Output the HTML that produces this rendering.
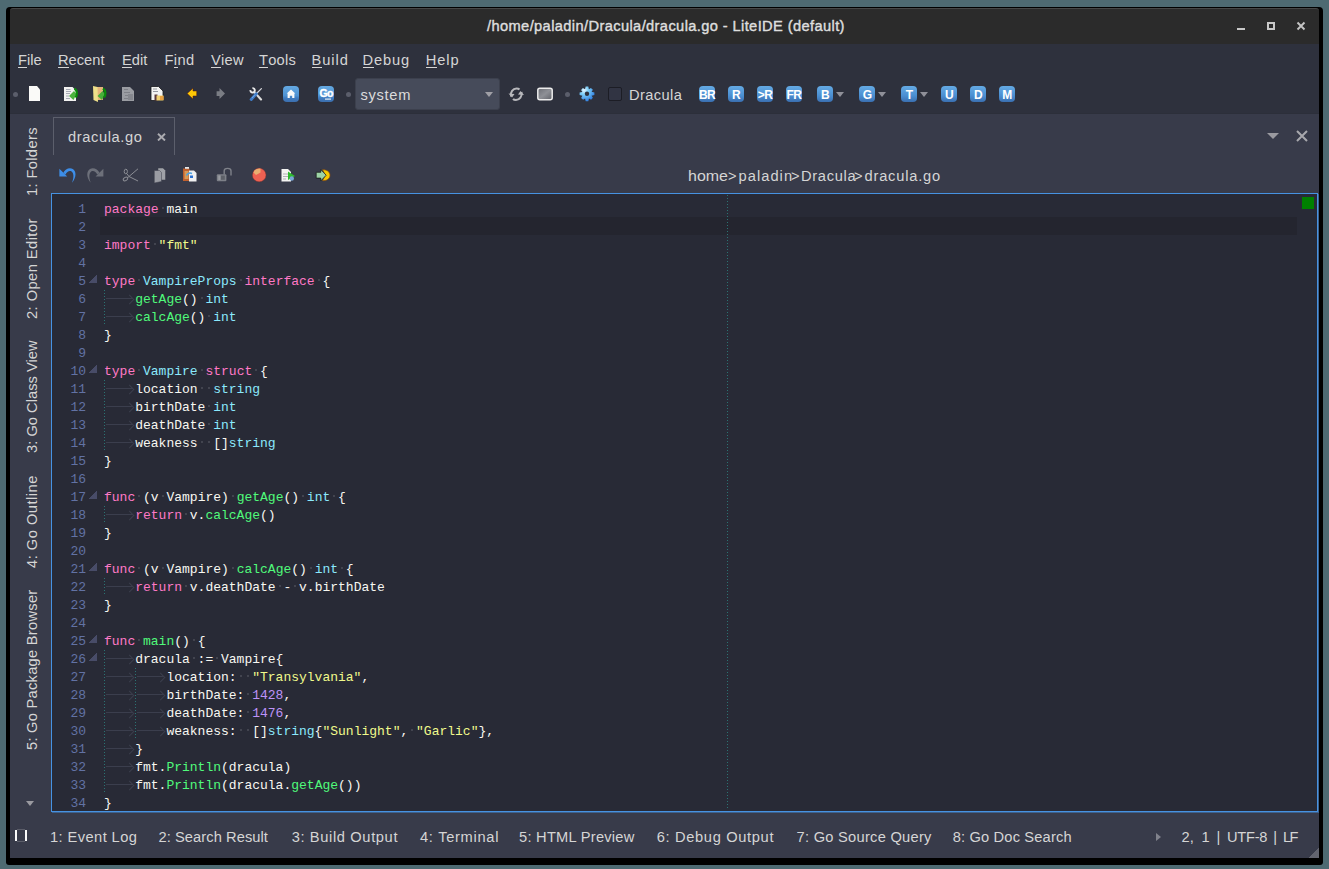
<!DOCTYPE html>
<html><head><meta charset="utf-8">
<style>
*{margin:0;padding:0;box-sizing:border-box}
html,body{width:1329px;height:869px;overflow:hidden;background:#4e6a72;font-family:"Liberation Sans",sans-serif}
.a{position:absolute}
#win{position:absolute;left:6px;top:7px;width:1317px;height:858px;background:#000;border-radius:4px 4px 3px 3px}
#title{position:absolute;left:10px;top:8px;width:1309px;height:36px;background:#2b2b2b;border-top:1px solid #474747;border-radius:3px 3px 0 0}
#title .t{position:absolute;left:477px;top:9px;font-size:14.67px;font-weight:400;color:#dedede;white-space:pre;letter-spacing:0.38px;-webkit-text-stroke:0.4px #dedede}
#top{position:absolute;left:10px;top:44px;width:1309px;height:70px;background:#2e313d;border-bottom:1px solid #2c2f3a}
#main{position:absolute;left:10px;top:114px;width:1309px;height:744px;background:#383b4a}
.menu{position:absolute;top:52px;font-size:14.67px;color:#d5d5d5;white-space:pre}
.menu u{text-decoration:none;position:relative}
.menu u:after{content:"";position:absolute;left:0;right:0;bottom:0px;height:1px;background:#d5d5d5}
.hdot{position:absolute;width:5px;height:5px;border-radius:50%;background:#5b5e6b}
.bi{position:absolute;top:86px;width:16px;height:16px;border-radius:4px;background:linear-gradient(#64aae4,#4b8fd2 60%,#3a6fb0);color:#fff;font-weight:700;font-size:12px;line-height:19px;text-align:center;letter-spacing:-0.6px}
.darr{position:absolute;top:92px;width:0;height:0;border-left:4px solid transparent;border-right:4px solid transparent;border-top:5px solid #8f9099}
#combo{position:absolute;left:355px;top:78px;width:145px;height:32px;background:#464b5a;border:1px solid #3c404d;border-radius:3px}
#combo .t{position:absolute;left:4.5px;top:8px;letter-spacing:0.7px;font-size:14.67px;color:#dcdcdc}
#combo .ar{position:absolute;left:129px;top:13px;border-left:4px solid transparent;border-right:4px solid transparent;border-top:5px solid #a0a0a6}
#chk{position:absolute;left:608px;top:87px;width:14px;height:14px;border:1px solid #1c1d25;border-radius:2px;background:#313443}
.bc{top:168px;color:#b4b4b4;transform-origin:0 0}
.txt{position:absolute;font-size:14.67px;color:#d5d5d5;white-space:pre}
#tab{position:absolute;left:53px;top:117px;width:122px;height:38px;border:1px solid #5c5f6c;border-bottom:none}
#editor{position:absolute;left:51px;top:193px;width:1267px;height:619px;border:1px solid #4692e2;box-shadow:1px 1px 0 rgba(70,146,226,0.45);background:#282a36;overflow:hidden}
#edwrap{position:absolute;left:0;top:0;width:1329px;height:869px;clip-path:inset(194px 10px 57px 52px)}
.curl{position:absolute;left:100px;top:217px;width:1197px;height:18px;background:#24252f}
.ruler{position:absolute;left:727px;top:195px;width:1px;height:613px;background:repeating-linear-gradient(#2b7373 0 1px,transparent 1px 3px)}
.guide{position:absolute;width:1px;background:repeating-linear-gradient(#2b7373 0 1px,transparent 1px 3px)}
.ln{position:absolute;left:0;height:18px;width:1300px;font-family:"Liberation Mono",monospace;font-size:13px;line-height:18px;white-space:pre}
.ln .no{position:absolute;left:0;width:86px;text-align:right;color:#6272a4}
.ln .cd{position:absolute;left:104px;top:0}
.ln b{font-weight:400}
.k{color:#ff79c6}.t{color:#8be9fd}.f{color:#50fa7b}.s{color:#f1fa8c}.n{color:#bd93f9}.d{color:#f8f8f2}
.sp{display:inline-block;width:7.8px;height:18px;vertical-align:top;position:relative}
.sp:after{content:"";position:absolute;left:3px;top:6px;width:2px;height:2px;background:#42444f}
.tb{display:inline-block;width:31.2px;height:18px;vertical-align:top;position:relative}
.tb:before{content:"";position:absolute;left:2px;top:7px;width:26.5px;height:1px;background:#3b3e4d}
.tb:after{content:"";position:absolute;left:21.8px;top:4.5px;width:6px;height:6px;border-right:1px solid #3b3e4d;border-top:1px solid #3b3e4d;transform:rotate(45deg);transform-origin:center}
.fold{position:absolute;left:89px;width:8px;height:8px;background:linear-gradient(to bottom right,transparent 50%,#484c68 50%)}
.vt{position:absolute;left:23.5px;font-size:14.67px;color:#d5d5d5;white-space:pre;transform-origin:0 0;transform:rotate(-90deg)}
.st{color:#e6e6e6}
.bt{position:absolute;top:829px;font-size:14.67px;color:#d5d5d5;white-space:pre}
</style></head><body>
<div id="win"></div>
<div id="title"><span class="t">/home/paladin/Dracula/dracula.go - LiteIDE (default)</span>
</div>
<!-- window controls -->
<div class="a" style="left:1237px;top:28px;width:8px;height:2px;background:#c8c8c8"></div>
<div class="a" style="left:1267px;top:22px;width:8px;height:8px;border:2px solid #c8c8c8"></div>
<svg class="a" style="left:1296px;top:21px" width="10" height="10" viewBox="0 0 10 10"><path d="M1.5 1.5L8.5 8.5M8.5 1.5L1.5 8.5" stroke="#c4c4c4" stroke-width="1.9"/></svg>

<div id="top"></div>
<div id="main"></div>

<!-- menu -->
<span class="menu" style="left:18px"><u>F</u>ile</span>
<span class="menu" style="left:58px"><u>R</u>ecent</span>
<span class="menu" style="left:122px"><u>E</u>dit</span>
<span class="menu" style="left:164.5px;letter-spacing:0.4px">F<u>i</u>nd</span>
<span class="menu" style="left:211px;letter-spacing:0.25px"><u>V</u>iew</span>
<span class="menu" style="left:259px;letter-spacing:0.25px"><u>T</u>ools</span>
<span class="menu" style="left:311.5px;letter-spacing:0.95px"><u>B</u>uild</span>
<span class="menu" style="left:362.5px;letter-spacing:0.85px"><u>D</u>ebug</span>
<span class="menu" style="left:425.8px;letter-spacing:0.9px"><u>H</u>elp</span>

<!-- toolbar -->
<div class="hdot" style="left:13px;top:92px"></div>
<div class="hdot" style="left:346px;top:92px"></div>
<div class="hdot" style="left:565px;top:92px"></div>


<svg class="a" style="left:0;top:0" width="620" height="200" viewBox="0 0 620 200">
<defs>
<linearGradient id="bl" x1="0" y1="0" x2="0" y2="1"><stop offset="0" stop-color="#64a9e2"/><stop offset="0.6" stop-color="#4f93d4"/><stop offset="0.75" stop-color="#3f7bc0"/><stop offset="1" stop-color="#3c6fae"/></linearGradient>
<linearGradient id="scr" x1="0" y1="0" x2="1" y2="1"><stop offset="0" stop-color="#6b6d74"/><stop offset="0.5" stop-color="#8e9096"/><stop offset="1" stop-color="#5f6168"/></linearGradient>
<radialGradient id="gear" cx="0.3" cy="0.25" r="0.8"><stop offset="0" stop-color="#e8f6ff"/><stop offset="0.35" stop-color="#7fd0f8"/><stop offset="1" stop-color="#2f7de0"/></radialGradient>
</defs>
<!-- new file -->
<path d="M29 86H37L40 89.5V101H29Z" fill="#fafaf8"/>
<!-- open file -->
<path d="M64 87H72.5L76 90.5V101H64Z" fill="#f2f2f0"/>
<path d="M66 89.5h4.5M66 91.5h5M66 93.5h4M66 96h3M66 98.5h4" stroke="#9ea3ad" stroke-width="0.9"/>
<path d="M69 96L74 91L76.5 94L73.5 100Z" fill="#4cb33e"/>
<path d="M74.5 88.5C77.5 90.5 77.5 95 75.5 97.5" stroke="#0a8a0a" stroke-width="2.2" fill="none"/>
<!-- open folder -->
<path d="M97 87H103V100H97Z" fill="#e5b57a"/>
<path d="M93 86L97.5 87L98 102L93.5 100Z" fill="#efe08a"/>
<path d="M97.5 96L102.5 91L105 94L102 100Z" fill="#48b03a"/>
<path d="M103 88.5C106 90.5 106 95 104 97.5" stroke="#0a8a0a" stroke-width="2.2" fill="none"/>
<!-- gray doc -->
<path d="M122 87H130L134 91V101H122Z" fill="#9a9ca2"/>
<path d="M124 89.5h4M124 92.5h6M125 95.5h3M124 98.5h4" stroke="#7e8087" stroke-width="1"/>
<path d="M128 94h5v6h-5z" fill="#85878e"/>
<!-- save all doc -->
<path d="M151 86.5H158.5L163 91V100.5H151Z" fill="#f3f3f1" stroke="#15161c" stroke-width="0.8"/>
<path d="M153 89h4M153 91.5h5" stroke="#8a8e96" stroke-width="0.9"/>
<path d="M154.5 94.5h3v6h-3z" fill="#5a3a3a"/>
<path d="M156.5 95.5h7v5h-7z" fill="#f0d070"/>
<path d="M160 96h3.5v4h-3.5z" fill="#e8a040"/>
<!-- yellow back arrow -->
<path d="M187.2 93.5L193 88.2V91H196.7V96H193V99Z" fill="#ffc806" stroke="#5a1a10" stroke-width="0.5"/>
<!-- gray forward arrow -->
<path d="M225 93.5L219.5 88V91.2H216.6V96H219.5V99Z" fill="#7a7d84"/>
<!-- tools -->
<path d="M254.6 92.4L261 99.4" stroke="#dcdcdc" stroke-width="2.2" stroke-linecap="round"/>
<path d="M252.41 88.11A2.2 2.2 0 1 1 250.41 90.11" stroke="#ececec" stroke-width="1.9" fill="none"/>
<path d="M261.4 88.6L256.5 93.5" stroke="#d4d4d8" stroke-width="1.3" stroke-linecap="round"/>
<path d="M256.3 93.8L251.2 99.4" stroke="#3f7cc8" stroke-width="3" stroke-linecap="round"/>
<path d="M255.2 94.6L252 98" stroke="#7fb0e8" stroke-width="0.8"/>
<!-- home -->
<rect x="283" y="86" width="16" height="16" rx="4" fill="url(#bl)"/>
<path d="M291 89.5L295.3 93.6H294.4V98H292.2V95.8H289.8V98H287.6V93.6H286.7Z" fill="#fafafa"/>
<!-- go -->
<rect x="318" y="86" width="16" height="16" rx="4" fill="url(#bl)"/>
<text x="319.4" y="97.4" font-family="Liberation Sans" font-weight="700" font-size="10.5" fill="#fff" stroke="#fff" stroke-width="0.35" letter-spacing="-0.5">Go</text>
<rect x="325" y="98.5" width="6" height="1.2" fill="#e0eaf4"/>
<!-- refresh -->
<path d="M511 96.5C510 92 513 88.5 516.5 88.5C518 88.5 519 89 519.5 89.5" stroke="#b8b8bc" stroke-width="2" fill="none"/>
<path d="M508.5 93.5L512 97.5L514.5 94Z" fill="#b8b8bc"/>
<path d="M521.5 92C522.5 96.5 519.5 100 516 100C514.5 100 513.5 99.5 513 99" stroke="#b8b8bc" stroke-width="2" fill="none"/>
<path d="M524 95L520.5 91L518 94.5Z" fill="#b8b8bc"/>
<!-- screen -->
<rect x="537.8" y="88.2" width="14.4" height="11.6" rx="2" fill="url(#scr)" stroke="#ececec" stroke-width="1.5"/>
<!-- gear -->
<g transform="translate(587 93.8)">
<path d="M-1.3 -7.4L1.3 -7.4L1.9 -4.6L3.9 -5.9L5.9 -4.1L4.6 -2L7.4 -1.3L7.4 1.3L4.6 1.9L5.9 3.9L4.1 5.9L2 4.6L1.3 7.4L-1.3 7.4L-1.9 4.6L-3.9 5.9L-5.9 4.1L-4.6 2L-7.4 1.3L-7.4 -1.3L-4.6 -1.9L-5.9 -3.9L-4.1 -5.9L-2 -4.6Z" fill="url(#gear)"/>
<circle r="2.2" fill="#2e313d"/>
</g>
</svg>

<div id="combo"><span class="t">system</span><span class="ar"></span></div>
<div id="chk"></div>
<span class="txt" style="left:629px;top:87px;letter-spacing:0.38px">Dracula</span>

<div class="bi" style="left:699px">BR</div>
<div class="bi" style="left:728px">R</div>
<div class="bi" style="left:757px">&gt;R</div>
<div class="bi" style="left:786px">FR</div>
<div class="bi" style="left:817px">B</div><div class="darr" style="left:836px"></div>
<div class="bi" style="left:859px">G</div><div class="darr" style="left:878px"></div>
<div class="bi" style="left:901px">T</div><div class="darr" style="left:920px"></div>
<div class="bi" style="left:941px">U</div>
<div class="bi" style="left:970px">D</div>
<div class="bi" style="left:999px">M</div>

<!-- tab bar -->
<div id="tab"></div>
<span class="txt" style="left:68px;top:129px;letter-spacing:0.6px">dracula.go</span>
<svg class="a" style="left:157px;top:133px" width="9" height="8" viewBox="0 0 9 8"><path d="M1 0.8L8 7.5M8 0.8L1 7.5" stroke="#ababb0" stroke-width="1.9"/></svg>
<div class="a" style="left:1267px;top:133px;border-left:6px solid transparent;border-right:6px solid transparent;border-top:6px solid #9a9aa0"></div>
<svg class="a" style="left:1296px;top:130px" width="12" height="12" viewBox="0 0 12 12"><path d="M1 1L11 11M11 1L1 11" stroke="#a8a8ad" stroke-width="2"/></svg>


<svg class="a" style="left:0;top:150px" width="400" height="45" viewBox="0 150 400 45">
<!-- undo -->
<path d="M63.2 173C65 168.8 69.5 167.2 72.8 168.9C76.3 171 76.8 177 72 182.8C74.3 177.2 73.6 172.8 71.6 171.5C69.5 170.2 66.8 171.6 65.6 174.6Z" fill="#3d8ee8"/>
<path d="M59.4 168.8L59.4 176.4L67.2 176.4Z" fill="#3d8ee8"/>
<!-- redo -->
<path d="M99.6 173C97.8 168.8 93.3 167.2 90 168.9C86.5 171 86 177 90.8 182.8C88.5 177.2 89.2 172.8 91.2 171.5C93.3 170.2 96 171.6 97.2 174.6Z" fill="#6d707a"/>
<path d="M103.4 168.8L103.4 176.4L95.6 176.4Z" fill="#6d707a"/>
<!-- cut -->
<g stroke="#8c8e95" stroke-width="1" fill="none">
<ellipse cx="125.8" cy="171.5" rx="1.6" ry="2.3"/>
<ellipse cx="125.5" cy="179" rx="2.4" ry="1.6" transform="rotate(-30 125.5 179)"/>
<path d="M126.8 173.7L129 176.5L138 168.8M127.5 177.8L129 176.5L138 181"/>
</g>
<!-- copy -->
<path d="M158 168H163L165.5 170.5V180H158Z" fill="#a0a2a8" stroke="#3a3d4a" stroke-width="0.5"/>
<path d="M154.3 170.5H159.5L161.5 172.5V181.5L154.3 183Z" fill="#9a9ca3" stroke="#3a3d4a" stroke-width="0.5"/>
<!-- paste -->
<path d="M183 168.5H189.5V181H183Z" fill="#c0602e"/>
<path d="M184.5 171H188.5V179H184.5Z" fill="#d89a58"/>
<rect x="185" y="167" width="4" height="1.8" fill="#e8e8e8"/>
<path d="M189 170.5H194L196.5 173V181.5H189Z" fill="#f0f0f0"/>
<path d="M186.5 175.5C187.5 173 190 172.5 192 173.5" stroke="#4aa0e0" stroke-width="1.6" fill="none"/>
<path d="M190 175.5h3v2.5h-3z" fill="#2a70d0"/>
<!-- lock -->
<rect x="216.8" y="174.2" width="9.6" height="7" rx="1" fill="#7d8088"/>
<path d="M218.3 175.5h2v4.5h-2z" fill="#9a9ca2"/>
<path d="M221 175.6h3.8v4.2h-3.8z" fill="#5d6068"/>
<path d="M224.2 174.5V170.8C224.2 167.6 231 167.6 231 170.8V175.5" stroke="#7f828a" stroke-width="1.4" fill="none"/>
<!-- red ball -->
<circle cx="259.2" cy="175" r="6.8" fill="#ee6152" stroke="#8a2f28" stroke-width="0.4"/>
<path d="M253.5 172.5C254.5 169.5 257 168.3 260.5 168.5L260.5 172.5L256 175Z" fill="#eaae70"/>
<!-- doc with arrow -->
<path d="M281.5 169H288L291 172V181.6H281.5Z" fill="#f4f4f2"/>
<path d="M283 174h5M283 176.5h5M283 179h3" stroke="#b0b3b9" stroke-width="1"/>
<path d="M288 171.5L295 176L288 180Z" fill="#2eba2e"/>
<circle cx="291.8" cy="178.5" r="2.2" fill="#7aa6d6"/>
<!-- green/yellow arrow -->
<path d="M322.5 169.8C327 169.5 330 172 330 175.2C330 178.5 327 181 322.5 180.6L325.5 175.2Z" fill="#f8c800" stroke="#8a4a10" stroke-width="0.7"/>
<path d="M316.2 172.3H320.8V169.6L326.2 175.2L320.8 180.8V178.1H316.2Z" fill="#9dd3a6" stroke="#10140f" stroke-width="0.7"/>
</svg>

<span class="txt bc" style="left:687.5px;transform:scaleX(1.09)">home</span>
<span class="txt bc" style="left:728px">&gt;</span>
<span class="txt bc" style="left:738.5px;letter-spacing:1.05px">paladin</span>
<span class="txt bc" style="left:791px">&gt;</span>
<span class="txt bc" style="left:801px;letter-spacing:0.7px">Dracula</span>
<span class="txt bc" style="left:854px">&gt;</span>
<span class="txt bc" style="left:864.5px;letter-spacing:0.8px">dracula.go</span>

<!-- editor -->
<div id="editor"></div>
<div id="edwrap">
<div class="curl"></div>
<div class="ruler"></div>
<div class="guide" style="left:104.0px;top:290px;height:35px"></div><div class="guide" style="left:104.0px;top:380px;height:71px"></div><div class="guide" style="left:104.0px;top:506px;height:17px"></div><div class="guide" style="left:104.0px;top:578px;height:17px"></div><div class="guide" style="left:104.0px;top:650px;height:143px"></div><div class="guide" style="left:135.2px;top:668px;height:71px"></div>
<div class="ln" style="top:201px"><span class="no">1</span><span class="cd"><b class="k">package</b><i class="sp"></i><b class="d">main</b></span></div>
<div class="ln" style="top:219px"><span class="no">2</span><span class="cd"></span></div>
<div class="ln" style="top:237px"><span class="no">3</span><span class="cd"><b class="k">import</b><i class="sp"></i><b class="s">&quot;fmt&quot;</b></span></div>
<div class="ln" style="top:255px"><span class="no">4</span><span class="cd"></span></div>
<div class="ln" style="top:273px"><span class="no">5</span><span class="cd"><b class="k">type</b><i class="sp"></i><b class="t">VampireProps</b><i class="sp"></i><b class="k">interface</b><i class="sp"></i><b class="d">{</b></span></div>
<div class="fold" style="top:275px"></div>
<div class="ln" style="top:291px"><span class="no">6</span><span class="cd"><i class="tb"></i><b class="f">getAge</b><b class="d">()</b><i class="sp"></i><b class="t">int</b></span></div>
<div class="ln" style="top:309px"><span class="no">7</span><span class="cd"><i class="tb"></i><b class="f">calcAge</b><b class="d">()</b><i class="sp"></i><b class="t">int</b></span></div>
<div class="ln" style="top:327px"><span class="no">8</span><span class="cd"><b class="d">}</b></span></div>
<div class="ln" style="top:345px"><span class="no">9</span><span class="cd"></span></div>
<div class="ln" style="top:363px"><span class="no">10</span><span class="cd"><b class="k">type</b><i class="sp"></i><b class="t">Vampire</b><i class="sp"></i><b class="k">struct</b><i class="sp"></i><b class="d">{</b></span></div>
<div class="fold" style="top:365px"></div>
<div class="ln" style="top:381px"><span class="no">11</span><span class="cd"><i class="tb"></i><b class="d">location</b><i class="sp"></i><i class="sp"></i><b class="t">string</b></span></div>
<div class="ln" style="top:399px"><span class="no">12</span><span class="cd"><i class="tb"></i><b class="d">birthDate</b><i class="sp"></i><b class="t">int</b></span></div>
<div class="ln" style="top:417px"><span class="no">13</span><span class="cd"><i class="tb"></i><b class="d">deathDate</b><i class="sp"></i><b class="t">int</b></span></div>
<div class="ln" style="top:435px"><span class="no">14</span><span class="cd"><i class="tb"></i><b class="d">weakness</b><i class="sp"></i><i class="sp"></i><b class="d">[]</b><b class="t">string</b></span></div>
<div class="ln" style="top:453px"><span class="no">15</span><span class="cd"><b class="d">}</b></span></div>
<div class="ln" style="top:471px"><span class="no">16</span><span class="cd"></span></div>
<div class="ln" style="top:489px"><span class="no">17</span><span class="cd"><b class="k">func</b><i class="sp"></i><b class="d">(v</b><i class="sp"></i><b class="d">Vampire)</b><i class="sp"></i><b class="f">getAge</b><b class="d">()</b><i class="sp"></i><b class="t">int</b><i class="sp"></i><b class="d">{</b></span></div>
<div class="fold" style="top:491px"></div>
<div class="ln" style="top:507px"><span class="no">18</span><span class="cd"><i class="tb"></i><b class="k">return</b><i class="sp"></i><b class="d">v.</b><b class="f">calcAge</b><b class="d">()</b></span></div>
<div class="ln" style="top:525px"><span class="no">19</span><span class="cd"><b class="d">}</b></span></div>
<div class="ln" style="top:543px"><span class="no">20</span><span class="cd"></span></div>
<div class="ln" style="top:561px"><span class="no">21</span><span class="cd"><b class="k">func</b><i class="sp"></i><b class="d">(v</b><i class="sp"></i><b class="d">Vampire)</b><i class="sp"></i><b class="f">calcAge</b><b class="d">()</b><i class="sp"></i><b class="t">int</b><i class="sp"></i><b class="d">{</b></span></div>
<div class="fold" style="top:563px"></div>
<div class="ln" style="top:579px"><span class="no">22</span><span class="cd"><i class="tb"></i><b class="k">return</b><i class="sp"></i><b class="d">v.deathDate</b><i class="sp"></i><b class="d">-</b><i class="sp"></i><b class="d">v.birthDate</b></span></div>
<div class="ln" style="top:597px"><span class="no">23</span><span class="cd"><b class="d">}</b></span></div>
<div class="ln" style="top:615px"><span class="no">24</span><span class="cd"></span></div>
<div class="ln" style="top:633px"><span class="no">25</span><span class="cd"><b class="k">func</b><i class="sp"></i><b class="f">main</b><b class="d">()</b><i class="sp"></i><b class="d">{</b></span></div>
<div class="fold" style="top:635px"></div>
<div class="ln" style="top:651px"><span class="no">26</span><span class="cd"><i class="tb"></i><b class="d">dracula</b><i class="sp"></i><b class="d">:=</b><i class="sp"></i><b class="d">Vampire{</b></span></div>
<div class="fold" style="top:653px"></div>
<div class="ln" style="top:669px"><span class="no">27</span><span class="cd"><i class="tb"></i><i class="tb"></i><b class="d">location:</b><i class="sp"></i><i class="sp"></i><b class="s">&quot;Transylvania&quot;</b><b class="d">,</b></span></div>
<div class="ln" style="top:687px"><span class="no">28</span><span class="cd"><i class="tb"></i><i class="tb"></i><b class="d">birthDate:</b><i class="sp"></i><b class="n">1428</b><b class="d">,</b></span></div>
<div class="ln" style="top:705px"><span class="no">29</span><span class="cd"><i class="tb"></i><i class="tb"></i><b class="d">deathDate:</b><i class="sp"></i><b class="n">1476</b><b class="d">,</b></span></div>
<div class="ln" style="top:723px"><span class="no">30</span><span class="cd"><i class="tb"></i><i class="tb"></i><b class="d">weakness:</b><i class="sp"></i><i class="sp"></i><b class="d">[]</b><b class="t">string</b><b class="d">{</b><b class="s">&quot;Sunlight&quot;</b><b class="d">,</b><i class="sp"></i><b class="s">&quot;Garlic&quot;</b><b class="d">},</b></span></div>
<div class="ln" style="top:741px"><span class="no">31</span><span class="cd"><i class="tb"></i><b class="d">}</b></span></div>
<div class="ln" style="top:759px"><span class="no">32</span><span class="cd"><i class="tb"></i><b class="d">fmt.</b><b class="f">Println</b><b class="d">(dracula)</b></span></div>
<div class="ln" style="top:777px"><span class="no">33</span><span class="cd"><i class="tb"></i><b class="d">fmt.</b><b class="f">Println</b><b class="d">(dracula.</b><b class="f">getAge</b><b class="d">())</b></span></div>
<div class="ln" style="top:795px"><span class="no">34</span><span class="cd"><b class="d">}</b></span></div>
</div>
<div class="a" style="left:1302px;top:197px;width:12px;height:12px;background:#008000"></div>

<!-- vertical tabs -->
<span class="vt" style="top:196px;letter-spacing:0.37px">1: Folders</span>
<span class="vt" style="top:318.5px;letter-spacing:0.45px">2: Open Editor</span>
<span class="vt" style="top:453px;letter-spacing:0.03px">3: Go Class View</span>
<span class="vt" style="top:568px;letter-spacing:0.5px">4: Go Outline</span>
<span class="vt" style="top:749.7px;letter-spacing:0.27px">5: Go Package Browser</span>
<div class="a" style="left:26px;top:801px;border-left:4.5px solid transparent;border-right:4.5px solid transparent;border-top:5px solid #9a9aa0"></div>

<!-- bottom tabs -->
<svg class="a" style="left:10px;top:825px" width="24" height="22" viewBox="10 825 24 22"><rect x="15" y="830" width="2" height="11" fill="#fafafa"/><rect x="25" y="830" width="2" height="11" fill="#fafafa"/><rect x="17" y="829" width="8" height="1" fill="#5b5d69"/><rect x="17" y="841" width="8" height="1" fill="#5b5d69"/></svg>
<span class="bt" style="left:50px;letter-spacing:0.42px">1: Event Log</span>
<span class="bt" style="left:158.5px;letter-spacing:0.07px">2: Search Result</span>
<span class="bt" style="left:291.7px;letter-spacing:0.63px">3: Build Output</span>
<span class="bt" style="left:420px;letter-spacing:0.7px">4: Terminal</span>
<span class="bt" style="left:519px;letter-spacing:0.25px">5: HTML Preview</span>
<span class="bt" style="left:656.7px;letter-spacing:0.66px">6: Debug Output</span>
<span class="bt" style="left:796.6px;letter-spacing:0.26px">7: Go Source Query</span>
<span class="bt" style="left:952.8px;letter-spacing:0.15px">8: Go Doc Search</span>
<div class="a" style="left:1156px;top:833px;border-top:4px solid transparent;border-bottom:4px solid transparent;border-left:5px solid #80828c"></div>
<span class="bt st" style="left:1181.5px">2,</span>
<span class="bt st" style="left:1201.5px">1</span>
<span class="bt st" style="left:1216.5px">|</span>
<span class="bt st" style="left:1227px;letter-spacing:-0.25px">UTF-8</span>
<span class="bt st" style="left:1273.2px">|</span>
<span class="bt st" style="left:1283px;letter-spacing:-1.6px">LF</span>
<div class="a" style="left:1309px;top:848px;width:10px;height:10px;background:linear-gradient(to bottom right,transparent 50%,#62646f 50%)"></div>
</body></html>
